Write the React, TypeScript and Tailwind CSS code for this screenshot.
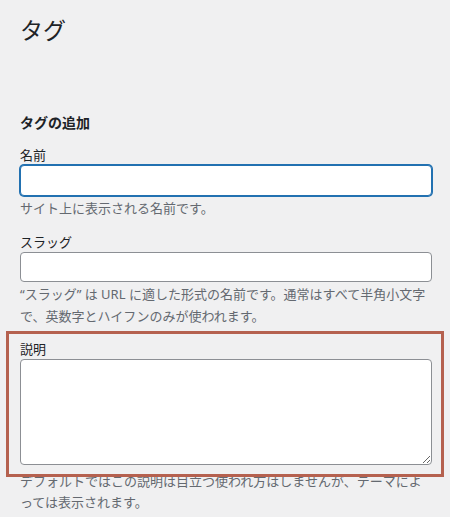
export default function App() {
  return (
    <div
      className="min-h-[517px] w-[450px] bg-[#f0f0f1] pl-5 pr-[18px] text-[#1d2327]"
      style={{ fontFamily: '"Noto Sans", "Noto Sans CJK JP", sans-serif' }}
    >
      <h1 className="pt-[15px] text-[23px] leading-[30px] font-normal">タグ</h1>

      <h2 className="mt-[68px] text-[14px] leading-[20px] font-semibold">タグの追加</h2>

      <div className="mt-[13px]">
        <label className="block text-[13px] leading-[19px]">名前</label>
        <input
          type="text"
          className="block h-[31px] w-full rounded-[4px] border border-[#2271b1] bg-white px-2 shadow-[0_0_0_1px_#2271b1] outline-none"
        />
        <p className="mt-px text-[13px] leading-[22px] text-[#646970]">サイト上に表示される名前です。</p>
      </div>

      <div className="mt-[13px]">
        <label className="block text-[13px] leading-[20px]">スラッグ</label>
        <input
          type="text"
          className="block h-[30px] w-full rounded-[4px] border border-[#8c8f94] bg-white px-2 outline-none"
        />
        <p className="mt-px text-[13px] leading-[22px] text-[#646970]">
          “スラッグ” は URL に適した形式の名前です。通常はすべて半角小文字で、英数字とハイフンのみが使われます。
        </p>
      </div>

      <div className="relative mt-[12px]">
        <label className="block text-[13px] leading-[20px]">説明</label>
        <textarea className="block h-[106px] w-full rounded-[4px] border border-[#8c8f94] bg-white px-2 outline-none" />
        <p className="mt-[6px] text-[13px] leading-[21px] text-[#646970]">
          デフォルトではこの説明は目立つ使われ方はしませんが、テーマによっては表示されます。
        </p>
        <div className="pointer-events-none absolute top-[-8px] right-[-12px] left-[-14px] h-[146px] border-[3px] border-[#b5614f]" />
      </div>
    </div>
  );
}
